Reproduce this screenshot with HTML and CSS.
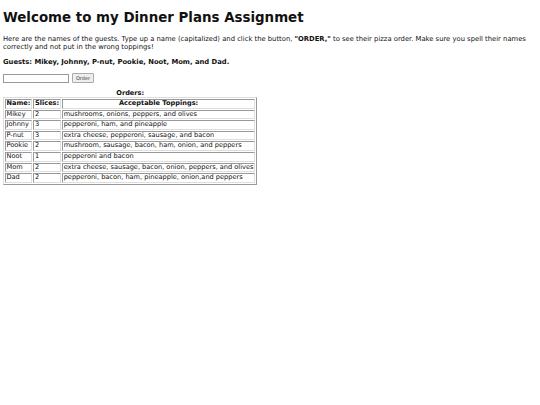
FILE: index.html
```html
<!DOCTYPE html>
<html>
<head>
<meta charset="utf-8">
<link rel="stylesheet" href="styles.css">
</head>
<body>
<h1 class="title">Welcome to my Dinner Plans Assignmet</h1>
<p class="intro">Here are the names of the guests. Type up a name (capitalized) and click the button, <b>"ORDER,"</b> to see their pizza order. Make sure you spell their names correctly and not put in the wrong toppings!</p>
<p class="guests">Guests: Mikey, Johnny, P-nut, Pookie, Noot, Mom, and Dad.</p>
<div class="form">
<input class="name" type="text">
<button class="order">Order</button>
</div>
<table class="orders">
<caption>Orders:</caption>
<tr><th>Name:</th><th>Slices:</th><th>Acceptable Toppings:</th></tr>
<tr><td>Mikey</td><td>2</td><td>mushrooms, onions, peppers, and olives</td></tr>
<tr><td>Johnny</td><td>3</td><td>pepperoni, ham, and pineapple</td></tr>
<tr><td>P-nut</td><td>3</td><td>extra cheese, pepperoni, sausage, and bacon</td></tr>
<tr><td>Pookie</td><td>2</td><td>mushroom, sausage, bacon, ham, onion, and peppers</td></tr>
<tr><td>Noot</td><td>1</td><td>pepperoni and bacon</td></tr>
<tr><td>Mom</td><td>2</td><td>extra cheese, sausage, bacon, onion, peppers, and olives</td></tr>
<tr><td>Dad</td><td>2</td><td>pepperoni, bacon, ham, pineapple, onion,and peppers</td></tr>
</table>
</body>
</html>
```
FILE: styles.css
```css
html, body { background: #fff; }
body {
  margin: 3px;
  font-family: "DejaVu Sans", Verdana, sans-serif;
  font-size: 6.8px;
  color: #111;
}
.title {
  font-size: 13.4px;
  font-weight: bold;
  margin: 7px 0 9px;
  line-height: 16px;
}
.intro { margin: 0 0 7px; line-height: 8px; }
.guests { font-weight: bold; margin: 0 0 7px; line-height: 8px; }
.form { display: flex; gap: 3px; align-items: center; margin-bottom: 6px; }
.name {
  box-sizing: border-box;
  width: 66px; height: 9px; padding: 0 1px; margin: 0;
  border: 1px solid #999; font-size: 5px;
}
.order {
  box-sizing: border-box;
  font-family: "DejaVu Sans", sans-serif;
  font-size: 5px; height: 10px; width: 22px; padding: 0; margin: 0;
  border: 1px solid #aaa; background: #eee; border-radius: 1px; color: #333;
}
.orders {
  font-size: 6.6px;
  border: 1px solid;
  border-color: #ddd #999 #999 #ddd;
  border-spacing: 1px;
}
.orders caption { font-weight: bold; line-height: 8px; }
.orders th, .orders td {
  border: 1px solid;
  border-color: #999 #ddd #ddd #999;
  padding: 0 1px 0 0.5px;
  line-height: 7.6px;
  text-align: left;
}
.orders th { text-align: center; }
```
